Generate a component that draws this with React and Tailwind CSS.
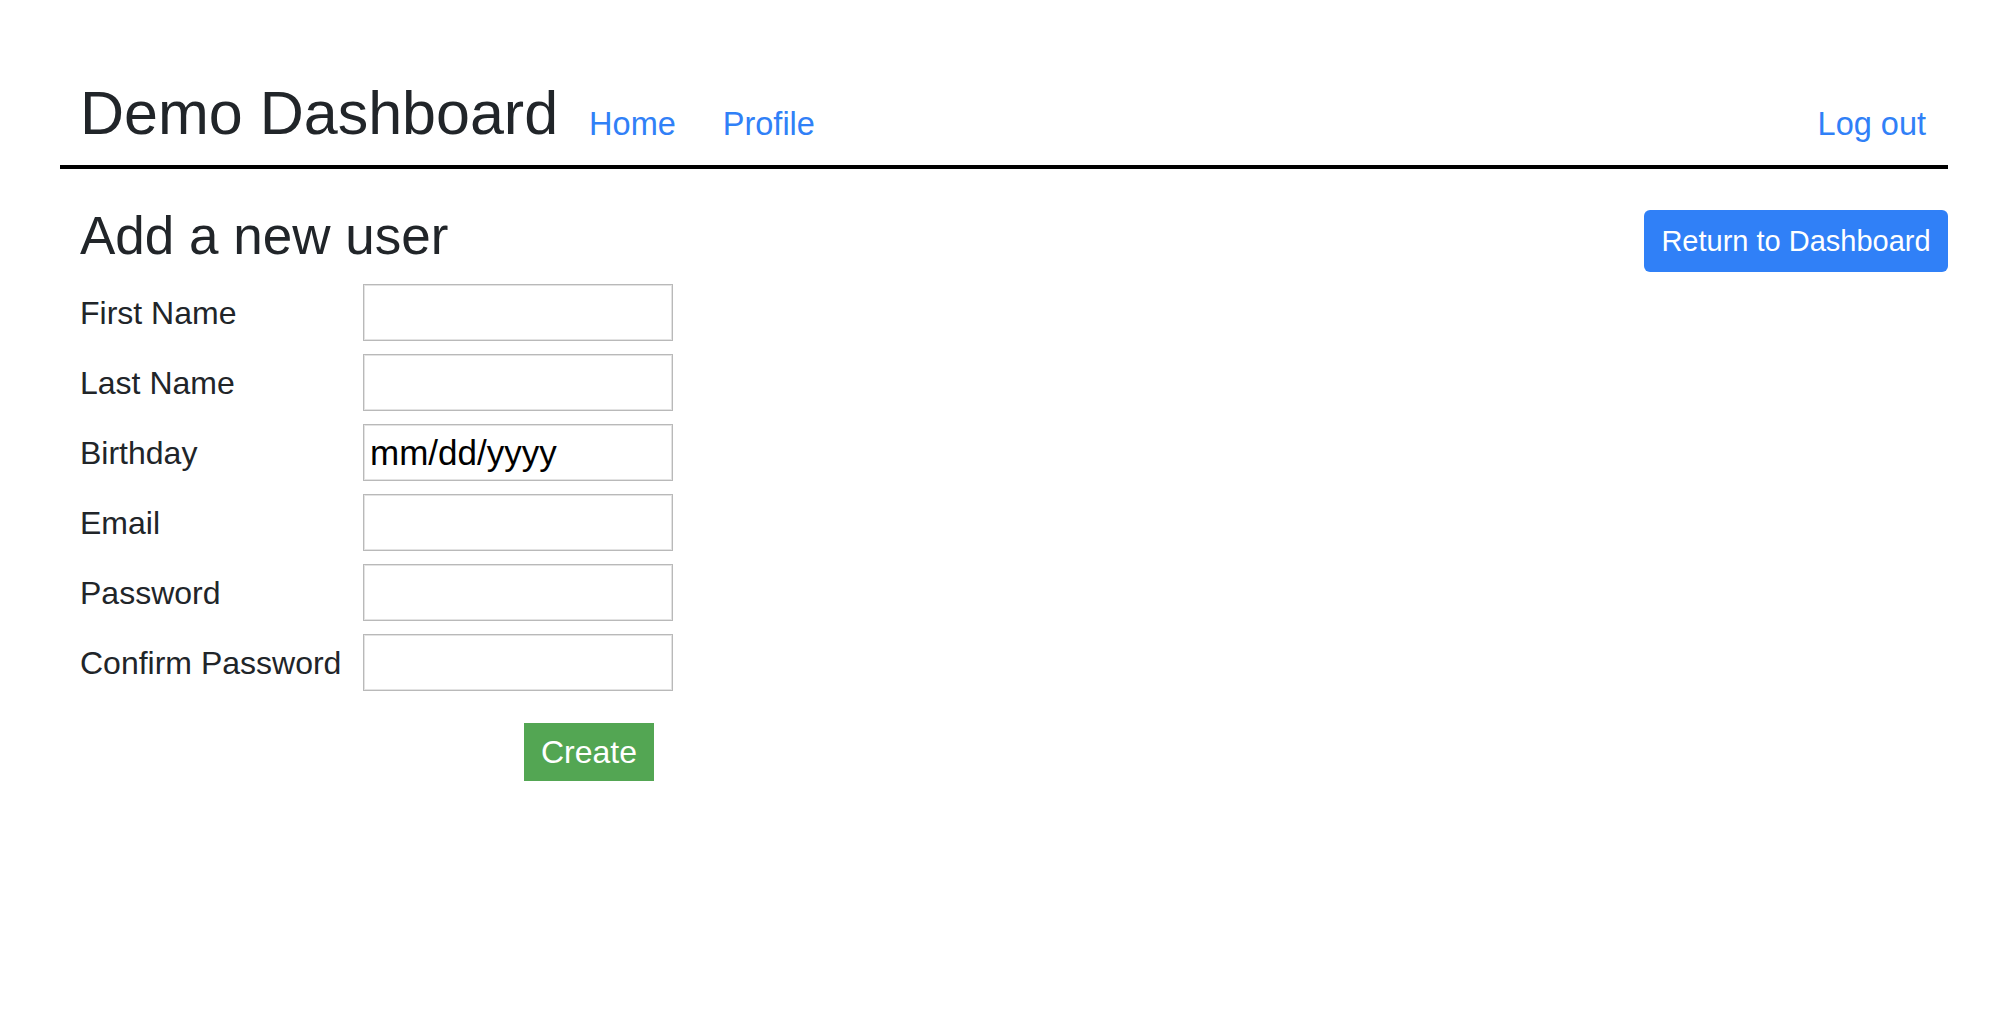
import React, { useState } from 'react';

const fields = [
  { label: 'First Name', type: 'text' },
  { label: 'Last Name', type: 'text' },
  { label: 'Birthday', type: 'date' },
  { label: 'Email', type: 'email' },
  { label: 'Password', type: 'password' },
  { label: 'Confirm Password', type: 'password' },
];

const App = () => {
  const [values, setValues] = useState({});

  const handleChange = (label, value) => {
    setValues((prev) => ({ ...prev, [label]: value }));
  };

  return (
    <div className="min-h-screen bg-white text-[#212529] font-['Liberation_Sans',Arial,sans-serif]">
      <div className="pl-[60px] pr-[48px]">
        {/* Header */}
        <div className="flex items-end border-b-4 border-black pl-[20px] pr-[22px] pt-[83px] pb-[21px]">
          <h1 className="text-[61px] leading-none font-normal mr-[31px]">Demo Dashboard</h1>
          <a href="#" className="text-[32.5px] leading-none text-[#3080f7] mb-[4px] mr-[47px]">
            Home
          </a>
          <a href="#" className="text-[32.5px] leading-none text-[#3080f7] mb-[4px]">
            Profile
          </a>
          <a href="#" className="ml-auto text-[32.5px] leading-none text-[#3080f7] mb-[4px]">
            Log out
          </a>
        </div>

        {/* Page body */}
        <div className="pl-[20px] pt-[40px]">
          <div className="flex items-start justify-between">
            <h2 className="text-[53px] leading-none font-normal">Add a new user</h2>
            <button className="mt-px w-[304px] h-[62px] rounded-[6px] bg-[#3080f7] text-white text-[29px] leading-none flex items-center justify-center">
              Return to Dashboard
            </button>
          </div>

          <form className="mt-[12px] flex flex-col gap-[13px]" onSubmit={(e) => e.preventDefault()}>
            {fields.map((field) => (
              <div key={field.label} className="flex items-center h-[57px]">
                <label className="w-[283px] text-[32px] leading-none">{field.label}</label>
                <input
                  type={field.type === 'date' ? 'text' : field.type}
                  placeholder={field.type === 'date' ? 'mm/dd/yyyy' : ''}
                  value={values[field.label] || ''}
                  onChange={(e) => handleChange(field.label, e.target.value)}
                  className="w-[310px] h-[57px] border border-[#b9b9b9] shadow-[inset_0_0_0_1px_#e3e3e3] px-[6px] text-[35px] text-black placeholder:text-black outline-none bg-white"
                />
              </div>
            ))}

            <div className="mt-[19px] pl-[444px]">
              <button
                type="submit"
                className="w-[130px] h-[58px] bg-[#53a653] text-white text-[32px] leading-none flex items-center justify-center"
              >
                Create
              </button>
            </div>
          </form>
        </div>
      </div>
    </div>
  );
};

export default App;
